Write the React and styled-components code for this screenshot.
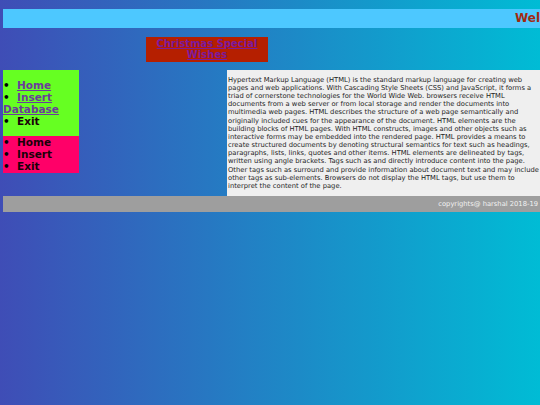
import styled, { createGlobalStyle } from 'styled-components';

const GlobalStyle = createGlobalStyle`
  html, body {
    margin: 0;
    padding: 0;
  }
  body {
    font-family: 'DejaVu Sans', Verdana, sans-serif;
  }
`;

const Page = styled.div`
  min-height: 100vh;
  box-sizing: border-box;
  padding: 9px 0 0 3px;
  background: linear-gradient(to right, #3f4db6, #00bcd5);
  overflow: hidden;
`;

const Header = styled.header`
  height: 19px;
  background: #4dc8ff;
  overflow: hidden;
  white-space: nowrap;
`;

const Title = styled.h1`
  margin: 0;
  padding-left: 512px;
  font-size: 12px;
  line-height: 19px;
  font-weight: bold;
  color: #a3290f;
`;

const Banner = styled.div`
  width: 122px;
  margin: 9px 0 8px 143px;
  padding: 1px 0;
  background: #b51f00;
  text-align: center;
  font-size: 10px;
  line-height: 11.4px;
  font-weight: bold;

  a {
    color: #7b1a9e;
  }
`;

const Main = styled.div`
  display: flex;
  align-items: flex-start;
`;

const Sidebar = styled.div`
  width: 224px;
  flex-shrink: 0;
`;

const NavBox = styled.ul`
  width: 76px;
  margin: 0;
  padding: ${p => (p.$spaced ? '9px 0 8px' : '0 0 1px')};
  background: ${p => p.$bg};
  list-style: none;
  font-size: 10.5px;
  line-height: 12.2px;
  font-weight: bold;
  color: #1a0008;

  li::before {
    content: '•';
    display: inline-block;
    width: 14px;
    color: #000;
  }

  a {
    color: #6b3c9c;
  }
`;

const Content = styled.div`
  flex: 1;
  height: 126px;
  box-sizing: border-box;
  padding: 6px 1px 0 1px;
  background: #efefef;
  color: #1e1e1e;
  font-size: 6.75px;
  line-height: 8.15px;

  p {
    margin: 0;
  }
`;

const Footer = styled.footer`
  height: 16px;
  padding-right: 2px;
  background: #9e9e9e;
  color: #f2f2f2;
  text-align: right;
  font-size: 6.75px;
  line-height: 16px;
`;

const text =
  'Hypertext Markup Language (HTML) is the standard markup language for creating web pages and web applications. With Cascading Style Sheets (CSS) and JavaScript, it forms a triad of cornerstone technologies for the World Wide Web. browsers receive HTML documents from a web server or from local storage and render the documents into multimedia web pages. HTML describes the structure of a web page semantically and originally included cues for the appearance of the document. HTML elements are the building blocks of HTML pages. With HTML constructs, images and other objects such as interactive forms may be embedded into the rendered page. HTML provides a means to create structured documents by denoting structural semantics for text such as headings, paragraphs, lists, links, quotes and other items. HTML elements are delineated by tags, written using angle brackets. Tags such as and directly introduce content into the page. Other tags such as surround and provide information about document text and may include other tags as sub-elements. Browsers do not display the HTML tags, but use them to interpret the content of the page.';

export default function App() {
  return (
    <>
      <GlobalStyle />
      <Page>
        <Header>
          <Title>Welcome</Title>
        </Header>
        <Banner>
          <a href="#wishes">Christmas Special Wishes</a>
        </Banner>
        <Main>
          <Sidebar>
            <NavBox $bg="#66ff22" $spaced>
              <li><a href="#home">Home</a></li>
              <li><a href="#insert">Insert Database</a></li>
              <li>Exit</li>
            </NavBox>
            <NavBox $bg="#ff0068">
              <li>Home</li>
              <li>Insert</li>
              <li>Exit</li>
            </NavBox>
          </Sidebar>
          <Content>
            <p>{text}</p>
          </Content>
        </Main>
        <Footer>copyrights@ harshal 2018-19</Footer>
      </Page>
    </>
  );
}
